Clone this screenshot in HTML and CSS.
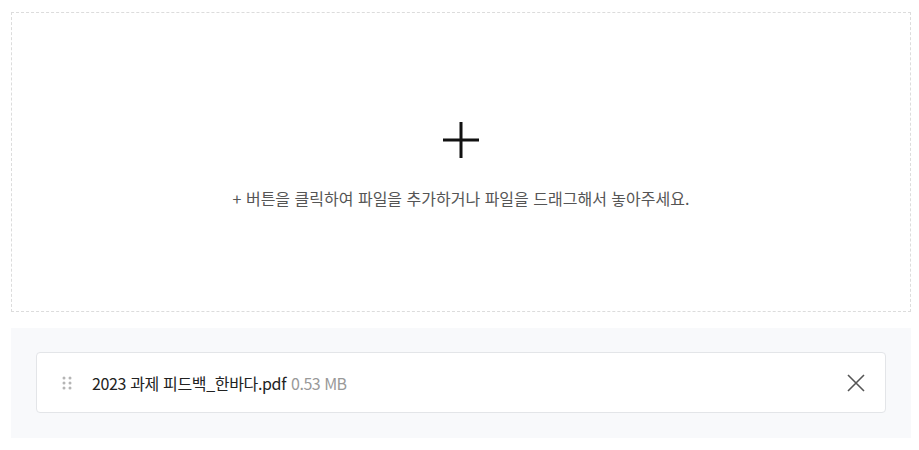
FILE: index.html
```html
<!DOCTYPE html>
<html lang="ko">
<head>
<meta charset="utf-8">
<link rel="stylesheet" href="styles.css">
</head>
<body>
<div class="page">
  <div class="dropzone">
    <svg class="plus" width="38" height="38" viewBox="0 0 38 38"><path d="M19 1V37M1 19H37" stroke="#111" stroke-width="3" fill="none"/></svg>
    <p class="hint">+ 버튼을 클릭하여 파일을 추가하거나 파일을 드래그해서 놓아주세요.</p>
  </div>
  <div class="filelist">
    <div class="fileitem">
      <svg class="handle" width="12" height="16" viewBox="0 0 12 16"><g fill="#b5b5b5"><circle cx="3" cy="3" r="1.5"/><circle cx="9" cy="3" r="1.5"/><circle cx="3" cy="8" r="1.5"/><circle cx="9" cy="8" r="1.5"/><circle cx="3" cy="13" r="1.5"/><circle cx="9" cy="13" r="1.5"/></g></svg>
      <span class="fname">2023 과제 피드백_한바다.pdf</span>
      <span class="fsize">0.53 MB</span>
      <svg class="close" width="18" height="18" viewBox="0 0 18 18"><path d="M1 1L17 17M17 1L1 17" stroke="#555" stroke-width="1.6" fill="none"/></svg>
    </div>
  </div>
</div>
</body>
</html>
```

FILE: styles.css
```css
html, body {
  margin: 0;
  padding: 0;
  background: #fff;
}
body {
  font-family: "Noto Sans CJK KR", "Noto Sans", sans-serif;
}
.page {
  padding: 12px 0 0 11px;
  width: 900px;
}
.dropzone {
  box-sizing: border-box;
  height: 300px;
  border: 1px dashed #dcdcdc;
  display: flex;
  flex-direction: column;
  align-items: center;
  justify-content: center;
  padding-top: 5px;
}
.plus {
  display: block;
}
.hint {
  margin: 28px 0 0;
  font-size: 16px;
  line-height: 22px;
  color: #555;
  letter-spacing: 0;
}
.filelist {
  margin-top: 16px;
  background: #f8f9fb;
  padding: 24px 25px 25px 25px;
}
.fileitem {
  box-sizing: border-box;
  height: 61px;
  background: #fff;
  border: 1px solid #e3e5e8;
  border-radius: 4px;
  display: flex;
  align-items: center;
  padding: 0 20px 0 24px;
}
.handle {
  flex: none;
  margin-right: 19px;
}
.fname {
  font-size: 16px;
  color: #222;
  letter-spacing: -0.35px;
}
.fsize {
  font-size: 16px;
  color: #999;
  margin-left: 5px;
  letter-spacing: -0.5px;
}
.close {
  margin-left: auto;
  flex: none;
}
```
